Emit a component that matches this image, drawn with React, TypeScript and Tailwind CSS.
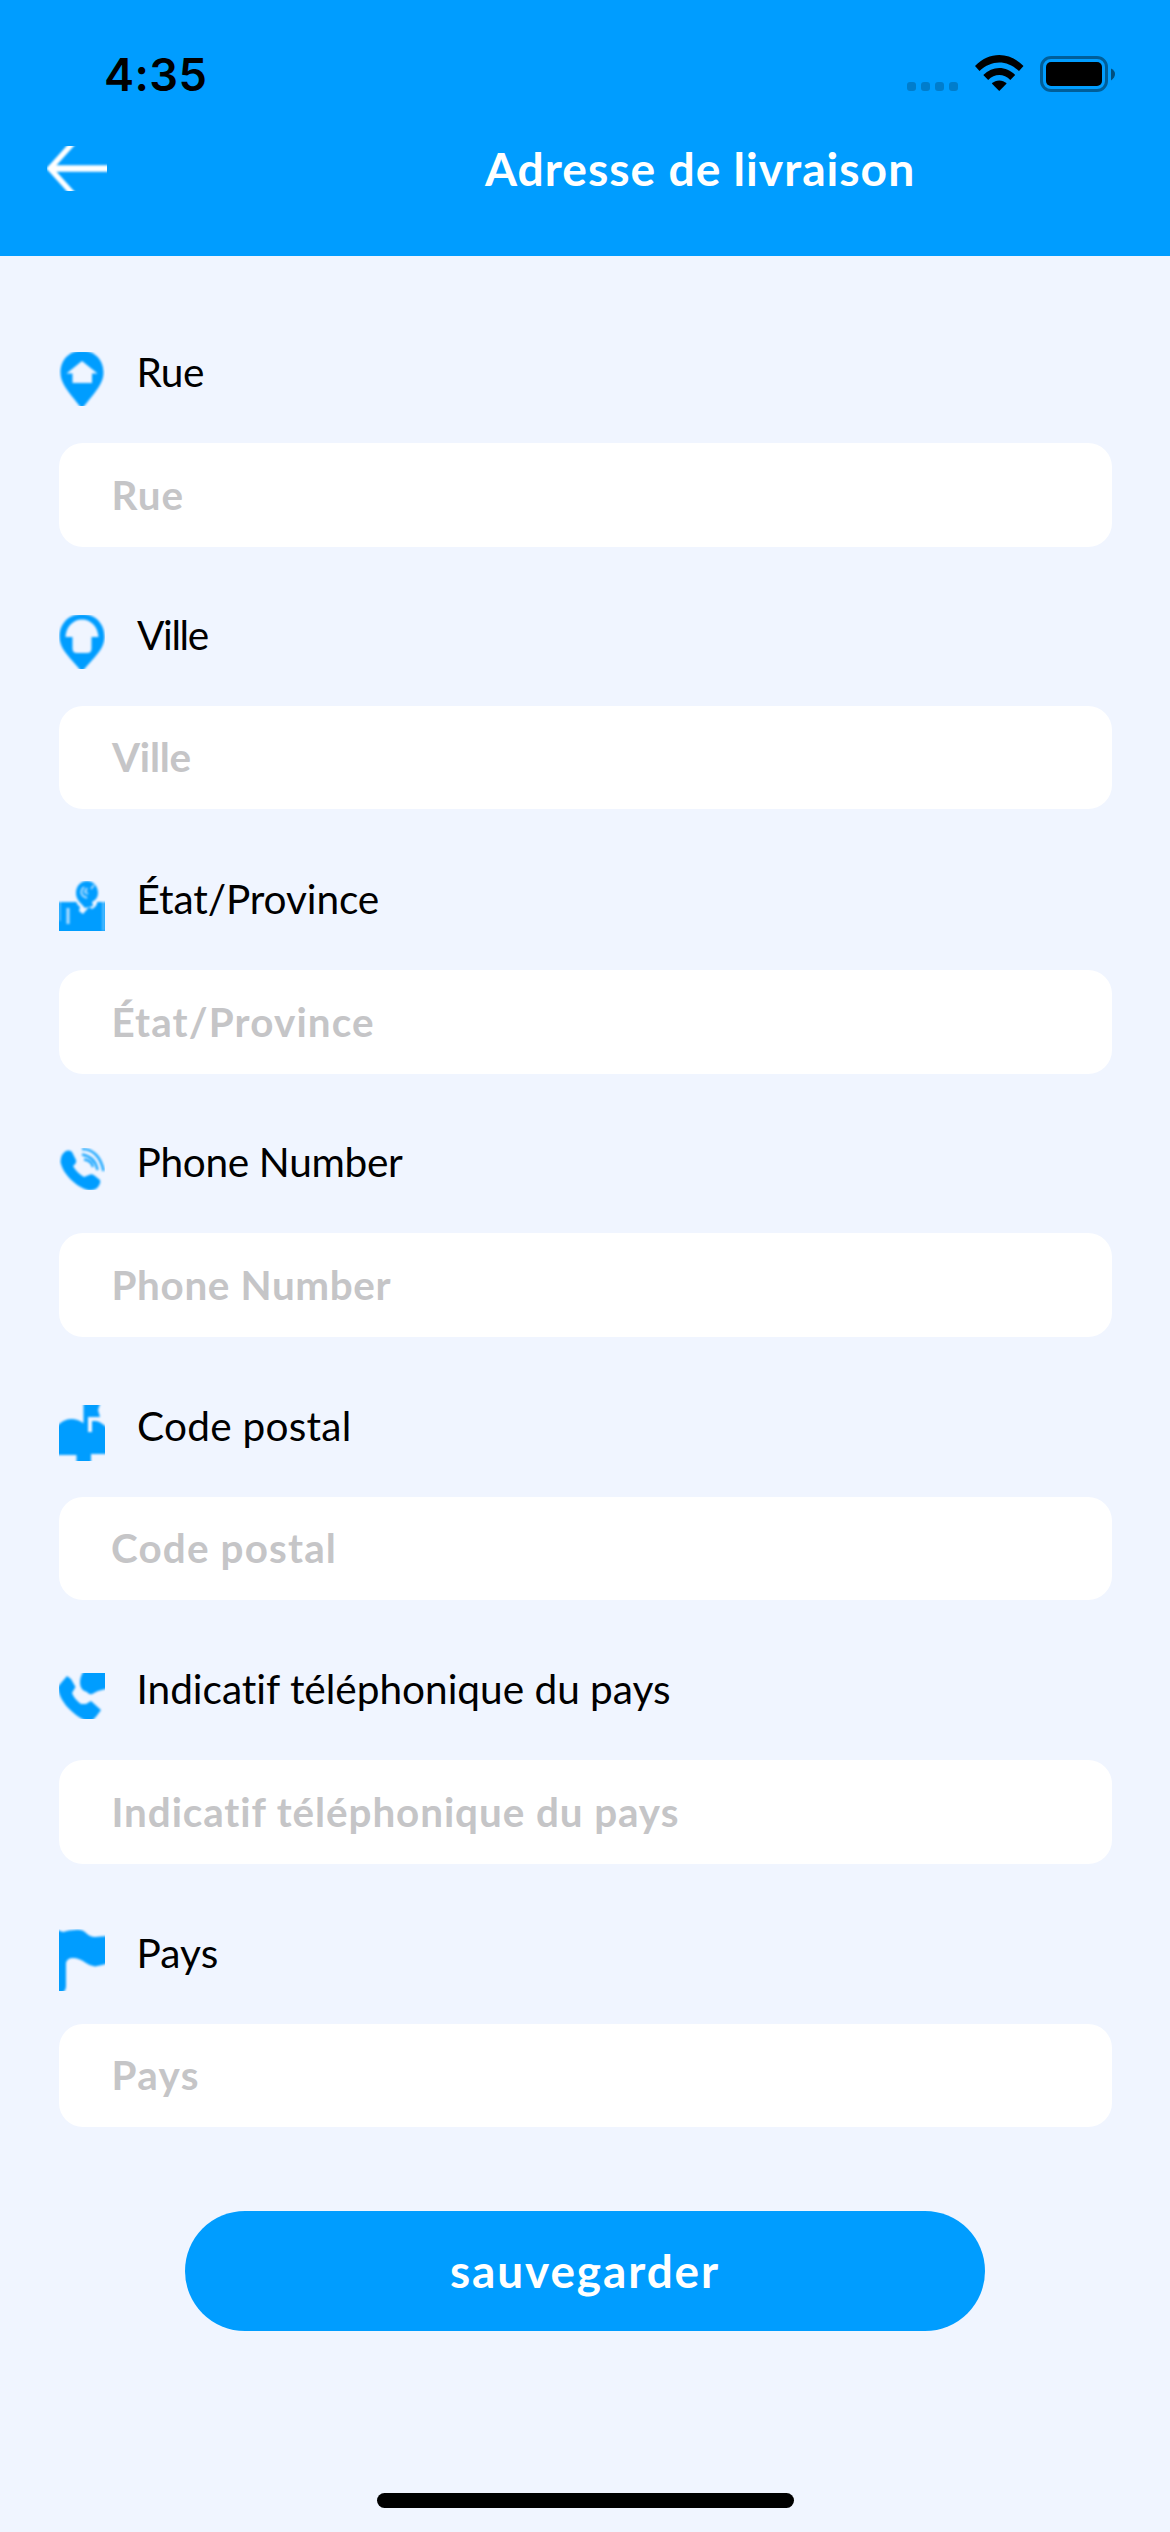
import type { ReactNode } from "react";

function Icon({ height, children }: { height: number; children: ReactNode }) {
  return (
    <svg width={46} height={height} viewBox={`0 0 46 ${height}`} className="shrink-0 overflow-hidden" aria-hidden>
      <g className="blur-[1px]">{children}</g>
    </svg>
  );
}

const BLUE = "#009dff";
const PAGE = "#f0f5ff";

const streetIcon = (
  <Icon height={54}>
    <path
      fill={BLUE}
      fillRule="evenodd"
      d="M23 -1.5C10.500 -1.500 1.500 8 1.500 20.500C1.500 33 12 42 23 57C34 42 44.500 33 44.500 20.500C44.500 8 35.500 -1.500 23 -1.500ZM23 9L38.500 21.500H33V31H13.500V21.500H7.500Z"
    />
  </Icon>
);

const cityIcon = (
  <Icon height={54}>
    <path
      fill={BLUE}
      fillRule="evenodd"
      d="M23 -1C9.500 -1 0.500 9 0.500 21.500C0.500 35 12 43 23 57C34 43 45.500 35 45.500 21.500C45.500 9 36.500 -1 23 -1ZM23 4.500C32 4.500 39 12 39.500 22H32.500V33.500Q32.500 38 28 38H18Q13.500 38 13.500 33.500V22H6.500C7 12 14 4.500 23 4.500Z"
    />
  </Icon>
);

const stateIcon = (
  <Icon height={50}>
    <path fill={BLUE} d="M-4 21H50V54H-4Z" />
    <path fill={PAGE} d="M17 18H38V23L36 26L33 28L30 26L24 33L20 30L21 26L18 23Z" />
    <path fill={BLUE} d="M28 0C21 0 17 6 17 12C17 19 22 22 26 27L34 25L33 21C37 19 39 16 39 12C39 6 35 0 28 0Z" />
    <path fill="none" stroke={PAGE} strokeWidth="2" d="M25 6Q20 11 24 15L28 17M28 7L26 11L29 13M35 4L32 8" opacity=".7" />
    <path fill={PAGE} d="M7.500 27H10.500V43H7.500Z" opacity=".75" />
    <path fill="#fff" d="M0 21H2V40H0ZM43 21H46V50H43Z" opacity=".3" />
  </Icon>
);

const phoneIcon = (
  <Icon height={42}>
    <path
      fill={BLUE}
      d="M3 7Q8 0 13 4L17 12Q18 15 14 18C17 23 20 26 25 29L30 27Q33 25 36 28L41 32Q42 35 39 39Q35 43 29 42C16 38 4 26 1.500 14Q1.500 10 3 7Z"
    />
    <path fill="none" stroke={BLUE} strokeWidth="2.600" d="M23 1C34 1 42 9 44.500 23M23 6.500C32 8 37 13 38.500 22M25 11.500C30 12 33 15 34 19" opacity=".85" />
  </Icon>
);

const postalIcon = (
  <Icon height={56}>
    <path fill={BLUE} d="M24.500 -4H42L39 5L41 12H29V19H24.500Z" />
    <path fill={BLUE} d="M-4 50V23Q4 14 12 14Q19 14 24 18L29 17V27H33V16H37Q43 17 50 25V49H32V60H17.500V50Z" />
    <path fill={PAGE} d="M29 12H33V26H29Z" />
  </Icon>
);

const dialCodeIcon = (
  <Icon height={46}>
    <path
      fill={BLUE}
      d="M2 10L8 3L12 6L16.500 14L13 20C15 25 18 28 22 31L27 31L32 28L42 37Q38 43 33 48H27C13 41 0 28 -1 14Z"
    />
    <path fill={BLUE} d="M25 -4H50V15Q44 17 39 18L35 20Q31 23 28 19Q21 17 21 10Q21 3 25 -2Z" />
  </Icon>
);

const countryIcon = (
  <Icon height={62}>
    <path
      fill={BLUE}
      d="M-4 0L4 3Q10 1 16 1Q23 0 27 4Q31 8 36 8Q41 7.500 50 7V34Q42 37 36 37.500Q31 37 27 34Q20 29 14 29Q8 29 7 34V57Q7 62 3 64H-4Z"
    />
  </Icon>
);

type Field = {
  label: string;
  icon: ReactNode;
  labelSpacing: string;
  hintSpacing: string;
  gap: string;
  box: string;
};

const fields: Field[] = [
  { label: "Rue", icon: streetIcon, labelSpacing: "pl-[31.5px] tracking-[-0.4px]", hintSpacing: "pl-[52.5px] tracking-[1px]", gap: "mt-[59px]", box: "h-[104px]" },
  { label: "Ville", icon: cityIcon, labelSpacing: "pl-[32px] tracking-[-1.4px]", hintSpacing: "pl-[53px] tracking-[-0.2px]", gap: "mt-[31px]", box: "h-[103px]" },
  { label: "État/Province", icon: stateIcon, labelSpacing: "pl-[31.5px] tracking-[-0.1px]", hintSpacing: "pl-[52.5px] tracking-[1.15px]", gap: "mt-[33px]", box: "h-[104px]" },
  { label: "Phone Number", icon: phoneIcon, labelSpacing: "pl-[31.5px] tracking-[-0.33px]", hintSpacing: "pl-[52.5px] tracking-[0.65px]", gap: "mt-[31px]", box: "h-[104px]" },
  { label: "Code postal", icon: postalIcon, labelSpacing: "pl-[32px] tracking-[0.24px]", hintSpacing: "pl-[52px] tracking-[1.16px]", gap: "mt-[32px]", box: "h-[103px]" },
  { label: "Indicatif téléphonique du pays", icon: dialCodeIcon, labelSpacing: "pl-[31.5px] tracking-[-0.02px]", hintSpacing: "pl-[52.5px] tracking-[0.92px]", gap: "mt-[32px]", box: "h-[104px]" },
  { label: "Pays", icon: countryIcon, labelSpacing: "pl-[31.5px] tracking-[0.1px]", hintSpacing: "pl-[52.5px] tracking-[1.4px]", gap: "mt-[32px]", box: "h-[103px]" },
];

function StatusBar() {
  return (
    <div className="flex h-[112px] items-center pt-[38px] pr-[55px] pl-[104px]">
      <span className="flex-1 font-['Inter',sans-serif] text-[45.2px] leading-none font-semibold tracking-[0.42px] text-black">4:35</span>
      <div className="mt-[23px] mr-[17px] flex gap-[5px]">
        {[0, 1, 2, 3].map((dot) => (
          <span key={dot} className="size-[9px] rounded-[3px] bg-black/20" />
        ))}
      </div>
      <svg width="49" height="36" viewBox="0 0 49 36" className="mr-[16px] -mt-[4px]" aria-hidden>
        <path d="M0 11C14 -3.600 34.500 -3.600 48.500 11L44 16C32 4.500 16.500 4.500 4.500 16Z" />
        <path d="M8.300 20C17.500 10.700 31 10.700 40.200 20L35.300 25C29 18.300 19.500 18.300 13.200 25Z" />
        <path d="M16.800 28.600C21 24.300 27.500 24.300 31.700 28.600L24.250 36Z" />
      </svg>
      <svg width="75" height="36" viewBox="0 0 75 36" className="-mt-[2px]" aria-hidden>
        <rect x="1.500" y="1.500" width="65" height="33" rx="9.500" fill="none" stroke="#000" strokeOpacity=".4" strokeWidth="3" />
        <rect x="6" y="6" width="56" height="24" rx="5" />
        <path d="M71 12.500Q75 14.500 75 18T71 24.500Z" fillOpacity=".5" />
      </svg>
    </div>
  );
}

export default function App() {
  return (
    <div className="flex h-[2532px] w-[1170px] flex-col overflow-hidden bg-[#f0f5ff] font-['Lato',sans-serif]">
      <header className="h-[256px] bg-[#009dff]">
        <StatusBar />
        <div className="flex h-[113px] items-center pl-[47px]">
          <svg width="60" height="45" viewBox="0 0 60 45" className="overflow-hidden" aria-hidden>
            <g fill="none" stroke="#fff" className="blur-[1px]">
              <path d="M2 22.500H64" strokeWidth="6.500" />
              <path d="M26 -3L3 22.500L26 48" strokeWidth="5.500" />
            </g>
          </svg>
          <h1 className="ml-[378px] text-[46.2px] leading-none font-bold tracking-[1px] whitespace-nowrap text-white">Adresse de livraison</h1>
        </div>
      </header>

      <main className="flex flex-col px-[59px]">
        {fields.map((field) => (
          <section key={field.label} className={field.gap}>
            <div className="flex h-32 items-center">
              {field.icon}
              <span className={`pb-[14px] text-[40.6px] leading-none whitespace-nowrap text-black ${field.labelSpacing}`}>{field.label}</span>
            </div>
            <div className={`-mr-px flex items-center rounded-[24px] bg-white ${field.box}`}>
              <span className={`text-[40.4px] leading-none font-bold whitespace-nowrap text-[#c5c5c7] ${field.hintSpacing}`}>{field.label}</span>
            </div>
          </section>
        ))}
        <button className="mt-[84px] flex h-[120px] w-[800px] items-center justify-center self-center rounded-full bg-[#009dff] pb-px text-[45.9px] leading-none font-bold tracking-[1.92px] text-white">
          sauvegarder
        </button>
      </main>

      <div className="mt-auto mb-[24px] h-[15px] w-[417px] self-center rounded-full bg-black" />
    </div>
  );
}
